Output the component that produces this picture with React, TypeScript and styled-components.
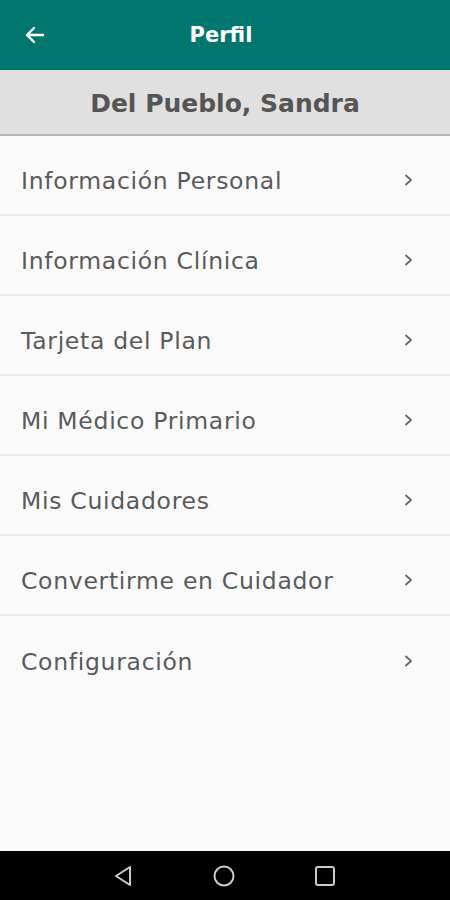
import React from 'react'
import styled, { createGlobalStyle } from 'styled-components'

const GlobalStyle = createGlobalStyle`
  html, body {
    margin: 0;
    padding: 0;
    height: 100%;
    background: #fafafa;
  }
  #root {
    height: 100%;
  }
`

const items = [
  'Información Personal',
  'Información Clínica',
  'Tarjeta del Plan',
  'Mi Médico Primario',
  'Mis Cuidadores',
  'Convertirme en Cuidador',
  'Configuración',
]

const App: React.FC = () => {
  return (
    <Screen>
      <GlobalStyle />
      <TopBar>
        <BackButton aria-label="Volver">
          <svg width="24" height="24" viewBox="0 0 24 24" fill="none">
            <path d="M20 12H5M11 5l-7 7 7 7" stroke="#fff" strokeWidth="2.4" strokeLinecap="round" strokeLinejoin="round" />
          </svg>
        </BackButton>
        <Title>Perfil</Title>
      </TopBar>
      <NameBar>Del Pueblo, Sandra</NameBar>
      <Menu>
        {items.map((label, i) => (
          <Row key={label} last={i === items.length - 1}>
            <RowLabel>{label}</RowLabel>
            <svg width="12" height="14" viewBox="0 0 12 14" fill="none">
              <path d="M3 2.5l5 4.5-5 4.5" stroke="#666" strokeWidth="1.8" strokeLinecap="round" strokeLinejoin="round" />
            </svg>
          </Row>
        ))}
      </Menu>
      <NavBar>
        <svg width="22" height="24" viewBox="0 0 22 24" fill="none">
          <path d="M18 3L4 12l14 9z" stroke="#ccc" strokeWidth="2" strokeLinejoin="round" />
        </svg>
        <svg width="24" height="24" viewBox="0 0 24 24" fill="none">
          <circle cx="12" cy="12" r="9.5" stroke="#ccc" strokeWidth="2" />
        </svg>
        <svg width="22" height="22" viewBox="0 0 22 22" fill="none">
          <rect x="2" y="2" width="18" height="18" rx="2" stroke="#ccc" strokeWidth="2" />
        </svg>
      </NavBar>
    </Screen>
  )
}

const Screen = styled.div`
  display: flex;
  flex-direction: column;
  height: 900px;
  background: #fafafa;
  font-family: 'DejaVu Sans', 'Open Sans', sans-serif;
`

const TopBar = styled.header`
  height: 70px;
  flex-shrink: 0;
  background: #00766f;
  display: flex;
  align-items: center;
  position: relative;
`

const BackButton = styled.button`
  background: none;
  border: 0;
  padding: 0;
  margin-left: 23px;
  display: flex;
`

const Title = styled.h1`
  position: absolute;
  left: 0;
  right: 0;
  top: 0;
  bottom: 0;
  margin: 0;
  display: flex;
  align-items: center;
  justify-content: center;
  padding-right: 8px;
  color: #fff;
  font-size: 21px;
  font-weight: 700;
  pointer-events: none;
`

const NameBar = styled.div`
  flex-shrink: 0;
  background: #e0e0e0;
  border-bottom: 2px solid #b5b5b5;
  display: flex;
  align-items: center;
  justify-content: center;
  padding-top: 3px;
  box-sizing: border-box;
  height: 66px;
  color: #555;
  font-size: 25px;
  font-weight: 700;
`

const Menu = styled.div`
  flex: 1;
  display: flex;
  flex-direction: column;
`

const Row = styled.div<{ last?: boolean }>`
  height: 80px;
  flex-shrink: 0;
  box-sizing: border-box;
  display: flex;
  align-items: center;
  justify-content: space-between;
  padding: 0 35px 0 21px;
  border-bottom: ${(props) => (props.last ? 'none' : '2px solid #ececec')};
  svg {
    margin-top: 10px;
  }
`

const RowLabel = styled.span`
  color: #5a5a5a;
  font-size: 23.5px;
  letter-spacing: 0.7px;
  margin-top: 12px;
`

const NavBar = styled.nav`
  height: 49px;
  flex-shrink: 0;
  background: #000;
  display: flex;
  align-items: center;
  justify-content: center;
  gap: 78px;
  padding-right: 2px;
`

export default App
